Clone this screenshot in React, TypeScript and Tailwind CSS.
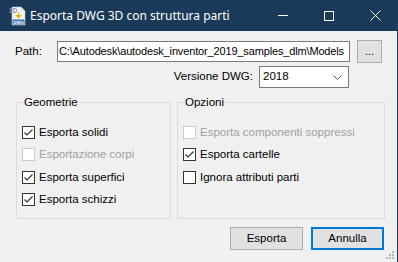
import React from 'react';

const ui = { fontFamily: '"Liberation Sans", Arial, sans-serif' };

function CheckBox({ label, checked, disabled }: { label: string; checked?: boolean; disabled?: boolean }) {
  return (
    <div className="flex items-center h-[22.5px]">
      <span
        className={`w-[13px] h-[13px] border bg-white flex items-center justify-center shrink-0 ${
          disabled ? 'border-[#cccccc]' : 'border-[#333333]'
        }`}
      >
        {checked && (
          <svg width="11" height="11" viewBox="0 0 11 11">
            <path d="M1.5 5.5 L4 8 L9.5 2.5" fill="none" stroke="#333333" strokeWidth="1.2" />
          </svg>
        )}
      </span>
      <span className={`ml-[4px] text-[11.5px] whitespace-nowrap ${disabled ? 'text-[#a0a0a0]' : 'text-black'}`}>
        {label}
      </span>
    </div>
  );
}

function GroupBox({ title, className, children }: { title: string; className: string; children: React.ReactNode }) {
  return (
    <div className={`relative border border-[#dcdcdc] pt-[18px] pl-[5px] ${className}`}>
      <span className="absolute -top-[8px] left-[6px] px-[1px] bg-[#f0f0f0] text-[11.5px] text-black leading-[14px]">
        {title}
      </span>
      {children}
    </div>
  );
}

export default function App() {
  return (
    <div className="w-[398px] h-[262px] flex flex-col bg-[#f0f0f0] overflow-hidden" style={ui}>
      {/* title bar */}
      <div className="h-[31px] bg-[#1b3a59] flex items-center shrink-0">
        <svg className="ml-[9px]" width="17" height="20" viewBox="0 0 17 20">
          <path d="M3 1 H12 L16 5 V19 H3 Z" fill="#f4f4f4" stroke="#c8c8c8" strokeWidth="0.6" />
          <path d="M12 1 V5 H16" fill="#dddddd" />
          <text x="0" y="7" fontSize="6.5" fill="#8a9aab" fontFamily="Liberation Sans" fontWeight="bold">3D</text>
          <path d="M9 6 V9 H6 L9.5 12.5 L13 9 H10 V6 Z" fill="#f0b400" />
          <rect x="3.5" y="13.5" width="12" height="5" fill="#3a6fb0" />
          <text x="4.5" y="17.8" fontSize="4.2" fill="#ffffff" fontFamily="Liberation Sans" fontWeight="bold">DWG</text>
        </svg>
        <span className="ml-[4px] text-[12px] text-white" style={{ fontFamily: '"Noto Sans", "Open Sans", sans-serif' }}>
          Esporta DWG 3D con struttura parti
        </span>
        <div className="ml-auto flex items-center h-full">
          <div className="w-[46px] h-full flex items-center justify-center">
            <div className="w-[10px] h-px bg-white" />
          </div>
          <div className="w-[46px] h-full flex items-center justify-center">
            <div className="w-[10px] h-[10px] border border-white" />
          </div>
          <div className="w-[46px] h-full flex items-center justify-center">
            <svg width="11" height="11" viewBox="0 0 11 11">
              <path d="M0.5 0.5 L10.5 10.5 M10.5 0.5 L0.5 10.5" stroke="#ffffff" strokeWidth="1" />
            </svg>
          </div>
        </div>
      </div>

      {/* body */}
      <div className="flex-1 flex flex-col border-r border-[#1b3a59] relative">
        <div className="flex items-center mt-[9px] ml-[15px]">
          <span className="w-[42px] text-[11.5px] text-black">Path:</span>
          <div className="w-[293px] h-[21px] bg-white border border-[#7a7a7a] flex items-center pl-[1px] text-[11px] tracking-[-0.15px] text-black overflow-hidden whitespace-nowrap">
            C:\Autodesk\autodesk_inventor_2019_samples_dlm\Models
          </div>
          <div className="ml-[7px] w-[25px] h-[23px] bg-[#e1e1e1] border border-[#adadad] flex items-center justify-center text-[11px] text-black">
            ...
          </div>
        </div>

        <div className="flex items-center justify-end mt-[3px] mr-[48px]">
          <span className="text-[11.5px] text-black whitespace-nowrap">Versione DWG:</span>
          <div className="ml-[6px] w-[90px] h-[22px] bg-white border border-[#7a7a7a] flex items-center pl-[3px] text-[11.5px] text-black">
            <span className="flex-1">2018</span>
            <svg className="mr-[6px]" width="9" height="5" viewBox="0 0 9 5">
              <path d="M0.5 0.5 L4.5 4.5 L8.5 0.5" fill="none" stroke="#555555" strokeWidth="1" />
            </svg>
          </div>
        </div>

        <div className="flex mt-[14px] ml-[16px] h-[117px]">
          <GroupBox title="Geometrie" className="w-[155px]">
            <CheckBox label="Esporta solidi" checked />
            <CheckBox label="Esportazione corpi" disabled />
            <CheckBox label="Esporta superfici" checked />
            <CheckBox label="Esporta schizzi" checked />
          </GroupBox>
          <GroupBox title="Opzioni" className="ml-[6px] w-[208px]">
            <CheckBox label="Esporta componenti soppressi" disabled />
            <CheckBox label="Esporta cartelle" checked />
            <CheckBox label="Ignora attributi parti" />
          </GroupBox>
        </div>

        <div className="flex justify-end mt-[8px] mr-[13px] gap-[8px]">
          <div className="w-[73px] h-[23px] bg-[#e1e1e1] border border-[#adadad] flex items-center justify-center text-[11.5px] text-black">
            Esporta
          </div>
          <div className="w-[73px] h-[23px] bg-[#e1e1e1] border-2 border-[#0078d7] flex items-center justify-center text-[11.5px] text-black">
            Annulla
          </div>
        </div>

        <svg className="absolute right-[2px] bottom-[2px]" width="10" height="10" viewBox="0 0 10 10">
          <rect x="7" y="1" width="2" height="2" fill="#b8b8b8" />
          <rect x="4" y="4" width="2" height="2" fill="#b8b8b8" />
          <rect x="7" y="4" width="2" height="2" fill="#b8b8b8" />
          <rect x="1" y="7" width="2" height="2" fill="#b8b8b8" />
          <rect x="4" y="7" width="2" height="2" fill="#b8b8b8" />
          <rect x="7" y="7" width="2" height="2" fill="#b8b8b8" />
        </svg>
      </div>
    </div>
  );
}
